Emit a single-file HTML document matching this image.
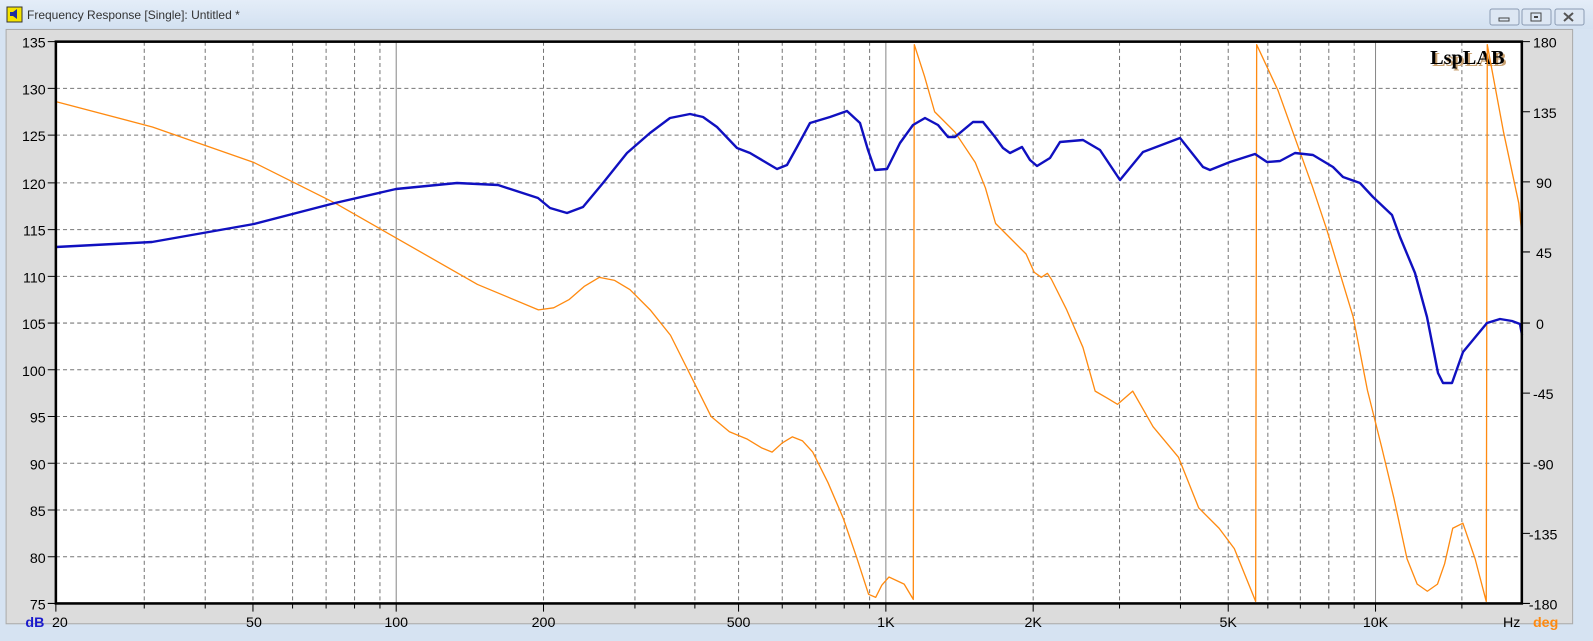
<!DOCTYPE html>
<html><head><meta charset="utf-8"><style>
html,body{margin:0;padding:0;width:1593px;height:641px;overflow:hidden;background:#d6e3f2;font-family:"Liberation Sans",sans-serif}
</style></head><body>
<svg width="1593" height="641" xmlns="http://www.w3.org/2000/svg" font-family="Liberation Sans, sans-serif">
<defs><linearGradient id="tb" x1="0" y1="0" x2="0" y2="1"><stop offset="0" stop-color="#e4edf8"/><stop offset="1" stop-color="#d3e1f1"/></linearGradient></defs>
<rect x="0" y="0" width="1593" height="641" fill="#d6e3f2"/>
<rect x="0" y="0" width="1593" height="29" fill="url(#tb)"/>
<rect x="7" y="7" width="15" height="15" fill="#f5e400" stroke="#333" stroke-width="1"/>
<path d="M10 12h3l4-3v10l-4-3h-3z" fill="#2030a0"/>
<text x="27" y="19" font-size="12" fill="#333">Frequency Response [Single]: Untitled *</text>
<g fill="#dde7f3" stroke="#8a9bb3"><rect x="1490" y="9" width="29" height="16" rx="2"/><rect x="1522" y="9" width="29" height="16" rx="2"/><rect x="1555" y="9" width="29" height="16" rx="2"/></g>
<rect x="1499" y="18" width="10" height="3" fill="none" stroke="#444"/>
<rect x="1531" y="13" width="10" height="8" fill="none" stroke="#444"/><rect x="1534" y="16" width="4" height="2" fill="#444"/>
<path d="M1564 13l9 8M1573 13l-9 8" stroke="#555" stroke-width="2"/>
<g transform="scale(1.0159)">
<rect x="6" y="29" width="1542" height="585" fill="#dcdcdc" stroke="#aaa"/>
<rect x="55" y="41" width="1443" height="553" fill="#fff"/>
<g stroke="#777" stroke-dasharray="4,3" stroke-width="1">
<line x1="55" y1="87" x2="1498" y2="87"/><line x1="55" y1="133" x2="1498" y2="133"/><line x1="55" y1="180" x2="1498" y2="180"/><line x1="55" y1="226" x2="1498" y2="226"/><line x1="55" y1="272" x2="1498" y2="272"/><line x1="55" y1="318" x2="1498" y2="318"/><line x1="55" y1="364" x2="1498" y2="364"/><line x1="55" y1="410" x2="1498" y2="410"/><line x1="55" y1="456" x2="1498" y2="456"/><line x1="55" y1="502" x2="1498" y2="502"/><line x1="55" y1="548" x2="1498" y2="548"/>
<line x1="142" y1="41" x2="142" y2="594"/><line x1="202" y1="41" x2="202" y2="594"/><line x1="249" y1="41" x2="249" y2="594"/><line x1="288" y1="41" x2="288" y2="594"/><line x1="321" y1="41" x2="321" y2="594"/><line x1="349" y1="41" x2="349" y2="594"/><line x1="374" y1="41" x2="374" y2="594"/>
<line x1="535" y1="41" x2="535" y2="594"/><line x1="625" y1="41" x2="625" y2="594"/><line x1="684" y1="41" x2="684" y2="594"/><line x1="727" y1="41" x2="727" y2="594"/><line x1="770" y1="41" x2="770" y2="594"/><line x1="803" y1="41" x2="803" y2="594"/><line x1="831" y1="41" x2="831" y2="594"/><line x1="856" y1="41" x2="856" y2="594"/>
<line x1="1017" y1="41" x2="1017" y2="594"/><line x1="1102" y1="41" x2="1102" y2="594"/><line x1="1162" y1="41" x2="1162" y2="594"/><line x1="1209" y1="41" x2="1209" y2="594"/><line x1="1248" y1="41" x2="1248" y2="594"/><line x1="1280" y1="41" x2="1280" y2="594"/><line x1="1308" y1="41" x2="1308" y2="594"/><line x1="1333" y1="41" x2="1333" y2="594"/>
<line x1="1439" y1="41" x2="1439" y2="594"/>
</g>
<g stroke="#888" stroke-width="1"><line x1="390" y1="41" x2="390" y2="594"/><line x1="872" y1="41" x2="872" y2="594"/><line x1="1354" y1="41" x2="1354" y2="594"/></g>
<text x="1483" y="65" font-family="Liberation Serif, serif" font-weight="bold" font-size="20" fill="#c8a070" text-anchor="end">LspLAB</text>
<text x="1481" y="63" font-family="Liberation Serif, serif" font-weight="bold" font-size="20" fill="#000" text-anchor="end">LspLAB</text>
<polyline fill="none" stroke="#ff8a10" stroke-width="1.3" stroke-linejoin="round" points="55,100 150,125 250,160 330,200 400,240 470,280 530,305 545,303 560,295 575,282 590,273 605,276 620,285 640,305 660,330 680,370 700,410 718,425 735,432 750,441 760,445 770,436 780,430 790,434 800,445 815,475 830,510 843,548 855,585 862,588 868,576 875,568 890,575 899,590 900,44 910,75 920,110 940,130 960,160 970,185 980,220 995,235 1010,250 1018,268 1025,273 1031,269 1035,275 1050,305 1066,342 1078,385 1090,392 1100,398 1115,385 1135,420 1160,450 1180,500 1200,520 1215,540 1236,592 1237,44 1258,89 1273,131 1292,184 1306,226 1322,279 1332,312 1346,384 1360,440 1372,490 1385,550 1395,575 1405,582 1415,575 1422,555 1430,520 1440,515 1452,550 1463,592 1464,44 1480,130 1495,200 1498,230"/>
</g>
<polyline fill="none" stroke="#1010c0" stroke-width="2.4" stroke-linejoin="round" points="56,247 152,242 254,224 335,203 396,189 457,183 498,185 538,198 550,208 567,213 583,207 603,183 627,153 650,133 670,118 690,114 703,117 717,127 737,148 750,153 777,169 787,165 797,147 810,123 830,117 847,111 860,123 868,150 875,170 887,169 900,143 913,125 925,118 938,125 948,137 955,137 973,122 983,122 995,137 1003,148 1010,153 1022,147 1030,160 1037,166 1050,158 1060,142 1083,140 1100,150 1120,180 1143,152 1180,138 1203,167 1210,170 1230,162 1255,154 1267,162 1280,161 1295,153 1313,155 1333,167 1343,177 1360,183 1373,197 1392,215 1400,237 1415,273 1427,317 1438,373 1443,383 1452,383 1463,352 1487,323 1500,319 1512,321 1520,324 1522,335"/>
<g transform="scale(1.0159)">
<rect x="55" y="41" width="1443" height="553" fill="none" stroke="#000" stroke-width="2.5"/>
<g stroke="#000" stroke-width="1">
<path d="M47 41h8M47 87h8M47 133h8M47 180h8M47 226h8M47 272h8M47 318h8M47 364h8M47 410h8M47 456h8M47 502h8M47 548h8M47 594h8"/>
<path d="M1498 41h8M1498 110h8M1498 179h8M1498 248h8M1498 318h8M1498 387h8M1498 456h8M1498 525h8M1498 594h8"/>
<path d="M55 594v8M142 594v5M202 594v5M249 594v8M288 594v5M321 594v5M349 594v5M374 594v5M390 594v8M535 594v8M625 594v5M684 594v5M727 594v8M770 594v5M803 594v5M831 594v5M856 594v5M872 594v8M1017 594v8M1102 594v5M1162 594v5M1209 594v8M1248 594v5M1280 594v5M1308 594v5M1333 594v5M1354 594v8M1439 594v5"/>
</g>
<g font-size="14" fill="#000" text-anchor="end">
<text x="45" y="47">135</text><text x="45" y="93">130</text><text x="45" y="139">125</text><text x="45" y="186">120</text><text x="45" y="232">115</text><text x="45" y="278">110</text><text x="45" y="324">105</text><text x="45" y="370">100</text><text x="45" y="416">95</text><text x="45" y="462">90</text><text x="45" y="508">85</text><text x="45" y="554">80</text><text x="45" y="600">75</text>
</g>
<g font-size="14" fill="#000">
<text x="1509" y="47">180</text><text x="1509" y="116">135</text><text x="1512" y="185">90</text><text x="1512" y="254">45</text><text x="1512" y="324">0</text><text x="1509" y="393">-45</text><text x="1509" y="462">-90</text><text x="1505" y="531">-135</text><text x="1505" y="600">-180</text>
</g>
<g font-size="14" fill="#000" text-anchor="middle">
<text x="59" y="617">20</text><text x="250" y="617">50</text><text x="390" y="617">100</text><text x="535" y="617">200</text><text x="727" y="617">500</text><text x="872" y="617">1K</text><text x="1017" y="617">2K</text><text x="1209" y="617">5K</text><text x="1354" y="617">10K</text><text x="1488" y="617">Hz</text>
</g>
<text x="25" y="617" font-size="14" font-weight="bold" fill="#1a1acc">dB</text>
<text x="1509" y="617" font-size="14" font-weight="bold" fill="#ff8a10">deg</text>
</g>
</svg>
</body></html>
